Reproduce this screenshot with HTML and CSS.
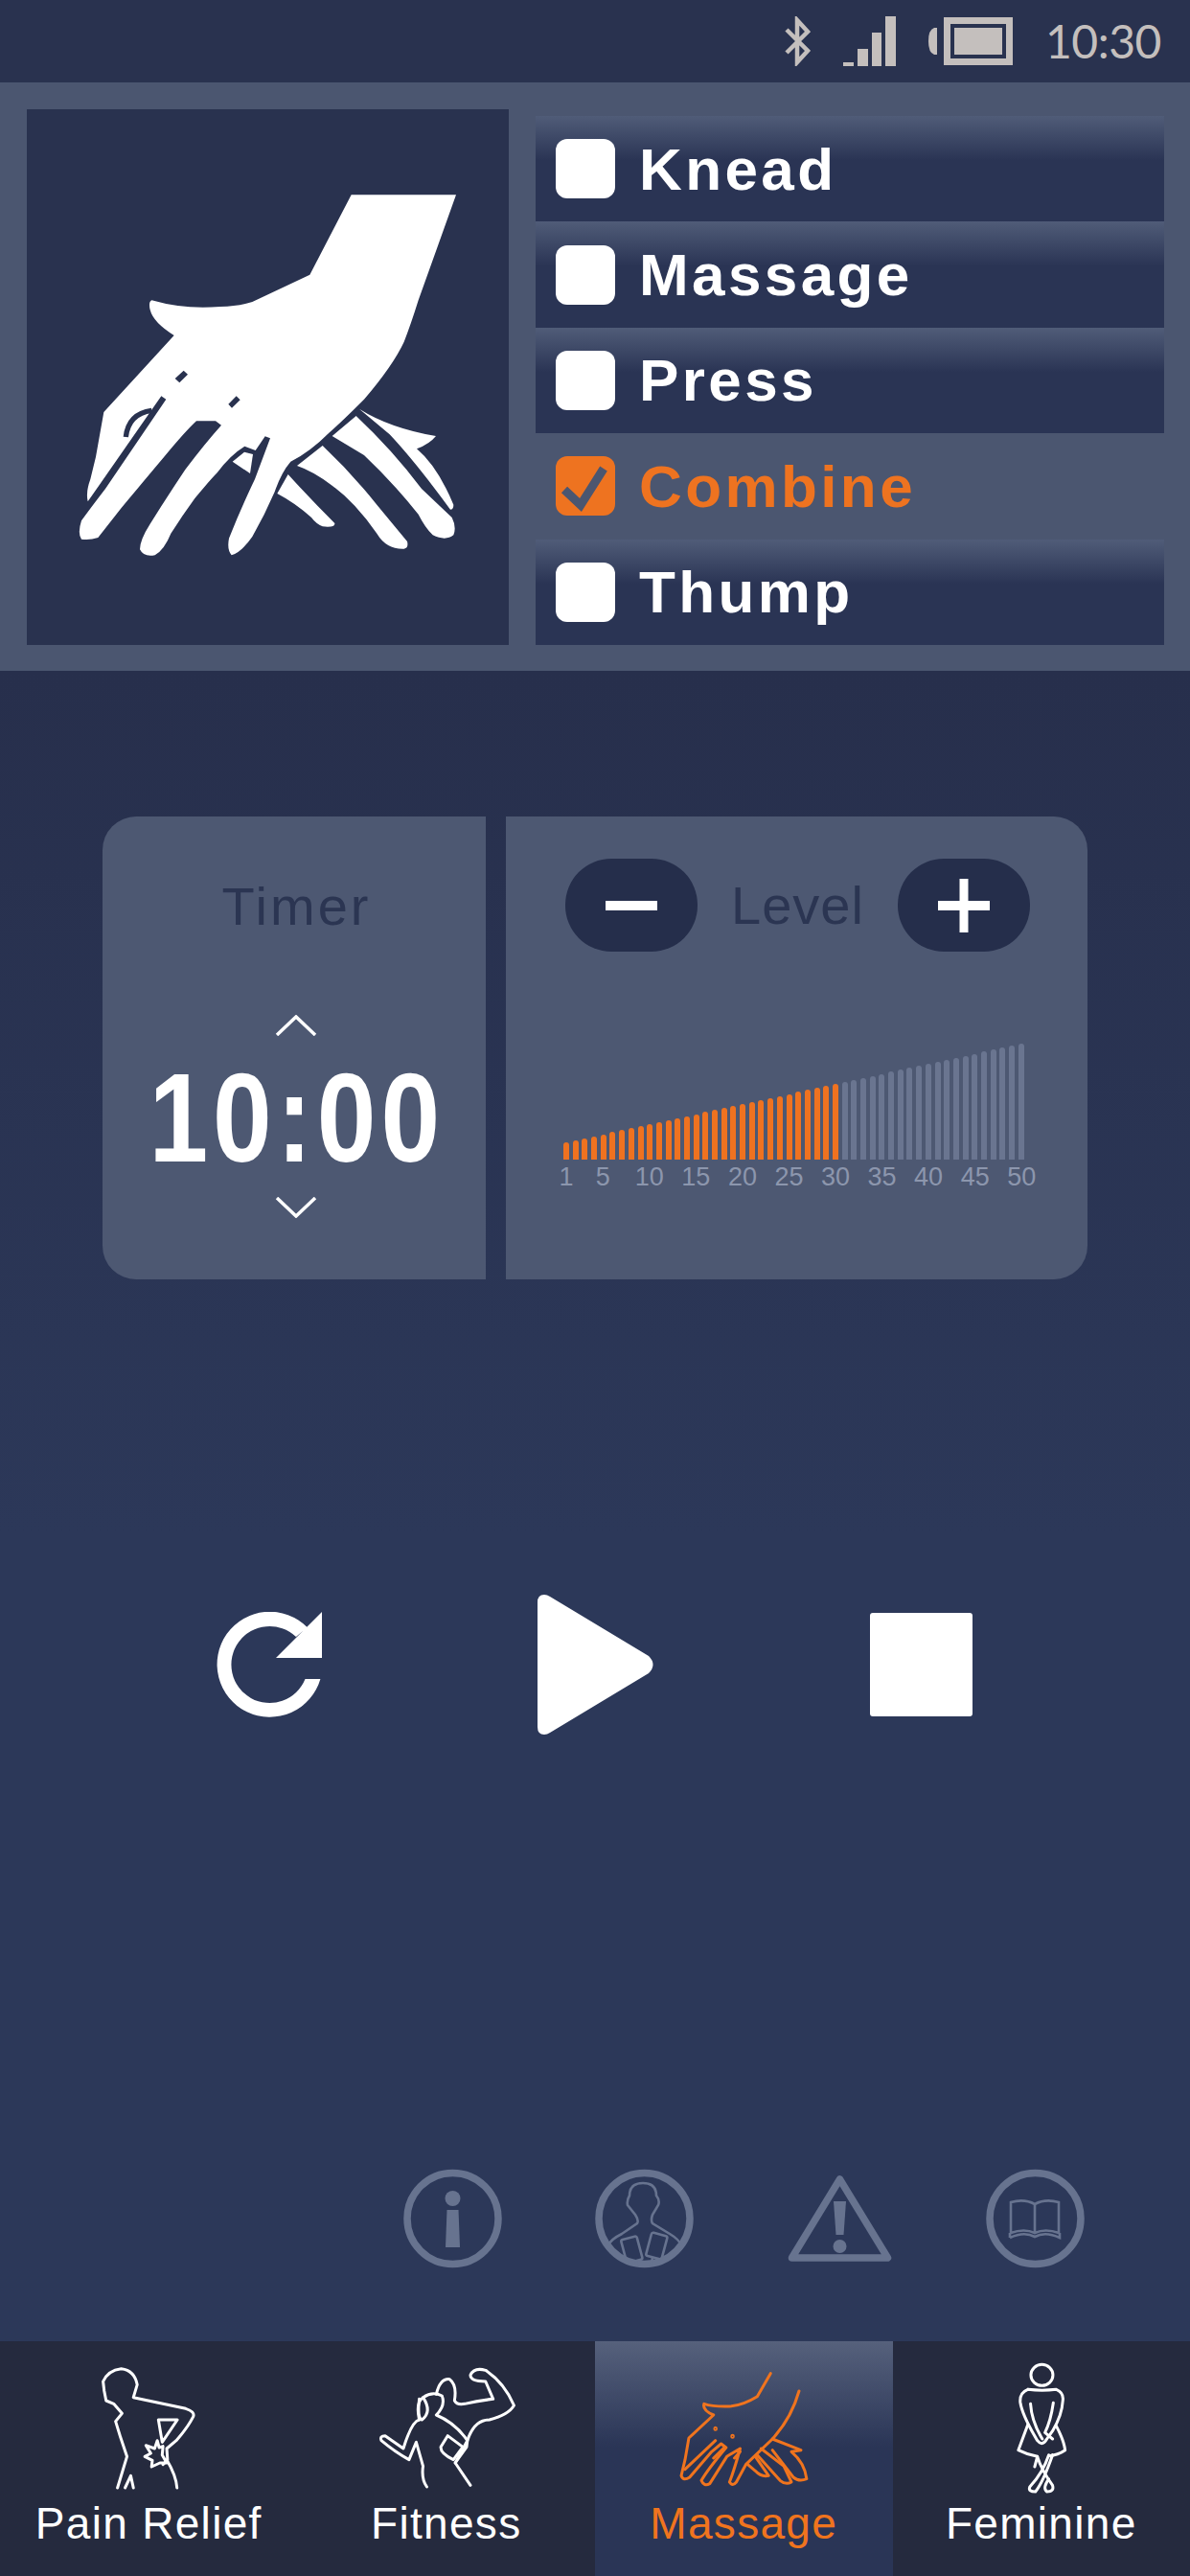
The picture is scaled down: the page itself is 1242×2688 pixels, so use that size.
FILE: index.html
```html
<!DOCTYPE html>
<html lang="en">
<head>
  <meta charset="utf-8">
  <title>Massage</title>
  <link rel="stylesheet" href="styles.css">
</head>
<body>
  <!-- status bar -->
  <div class="status-bar">
    <svg class="status-icon" width="27" height="52" viewBox="0 0 27 52"><path d="M2 14 L24 36 L13 48 L13 4 L24 16 L2 38" fill="none" stroke="#c4bfbd" stroke-width="4.5"/></svg>
    <svg class="status-icon" width="55" height="52" viewBox="0 0 55 52"><rect x="0" y="48" width="11" height="4" /><rect x="15" y="34" width="11" height="18"/><rect x="30" y="17" width="10" height="35"/><rect x="44" y="0" width="11" height="52"/></svg>
    <svg class="status-icon" width="88" height="50" viewBox="0 0 88 50"><path d="M9 11 H6 Q0 13 0 25 Q0 37 6 39 H9 Z"/><rect x="19.5" y="3.5" width="65" height="43" fill="none" stroke="#c4bfbd" stroke-width="7"/><rect x="27" y="11" width="50" height="28"/></svg>
    <span class="clock">10:30</span>
  </div>

  <!-- mode picker -->
  <div class="top-panel">
    <div class="hand-box">
      <svg class="hand" viewBox="-96 -138 1509 1677">
        <path d="M920,130 L1248,130 L1130,460 Q1105,540 1085,590 Q1050,665 960,770 Q890,840 850,875 Q790,935 730,965 Q700,1000 680,1060 Q650,1130 610,1200 Q575,1250 545,1258 Q530,1240 537,1205 Q575,1110 618,1020 L666,892 L650,886 L620,930 L586,917 Q540,945 500,1000 Q480,1020 430,1080 Q390,1135 355,1190 Q335,1240 305,1258 Q270,1265 258,1240 Q258,1210 290,1160 Q340,1080 400,990 Q460,910 513,851 L495,838 L435,838 Q400,870 330,955 Q250,1050 200,1110 L127,1203 Q100,1212 75,1208 Q62,1190 75,1150 Q100,1115 150,1050 L340,770 L325,760 L95,1090 Q88,1060 103,1020 L120,950 L145,810 L365,570 Q300,530 290,490 Q284,465 295,460 Q400,490 510,480 Q570,478 610,465 L790,380 Z"/>
        <path d="M585,935 L612,942 L603,1002 L548,965 Z"/>
        <path d="M722,1005 Q790,1080 868,1158 Q870,1172 830,1168 Q810,1160 795,1140 Q745,1095 688,1065 Z"/>
        <path d="M750,978 L830,915 Q920,1000 1000,1100 L1095,1215 Q1100,1235 1085,1238 Q1030,1240 1000,1190 Q930,1090 860,1040 Q800,995 750,978 Z"/>
        <path d="M860,885 L935,822 Q1050,930 1140,1050 L1235,1140 Q1250,1170 1240,1195 Q1215,1215 1175,1195 Q1150,1170 1130,1130 Q1050,1030 960,945 Z"/>
        <path d="M945,800 Q1040,860 1185,885 Q1165,910 1125,925 Q1190,980 1240,1100 Q1240,1115 1230,1115 Q1120,965 1040,880 Z"/>
        <path class="hand-cut" d="M368,705 L395,680 L408,692 L382,718 Z M535,785 L560,760 L572,772 L546,797 Z"/>
        <path class="hand-line" d="M214,888 Q222,815 295,805"/>
      </svg>
    </div>
    <div class="mode-list">
      <div class="mode-row"><span class="check"></span>Knead</div>
      <div class="mode-row"><span class="check"></span>Massage</div>
      <div class="mode-row"><span class="check"></span>Press</div>
      <div class="mode-row mode-on">
        <span class="check check-on"><svg width="62" height="62" viewBox="0 0 62 62"><path d="M9 35 L26 51 L50 13" fill="none" stroke="#4b5670" stroke-width="9"/></svg></span>Combine
      </div>
      <div class="mode-row"><span class="check"></span>Thump</div>
    </div>
  </div>

  <!-- timer and level -->
  <div class="card">
    <div class="timer-cell">
      <div class="card-title">Timer</div>
      <svg class="chev chev-up" width="44" height="22" viewBox="0 0 44 22"><path d="M2 21 L22 2 L42 21" fill="none" stroke="#fff" stroke-width="3.5"/></svg>
      <div class="time-big">10:00</div>
      <svg class="chev chev-down" width="44" height="22" viewBox="0 0 44 22"><path d="M2 1 L22 20 L42 1" fill="none" stroke="#fff" stroke-width="3.5"/></svg>
    </div>
    <div class="level-cell">
      <div class="level-head">
        <div class="round-btn"><svg width="56" height="56" viewBox="0 0 56 56"><rect x="1" y="23" width="54" height="10" fill="#fff"/></svg></div>
        <div class="card-title">Level</div>
        <div class="round-btn"><svg width="56" height="56" viewBox="0 0 56 56"><rect x="1" y="23" width="54" height="10" fill="#fff"/><rect x="23.5" y="0" width="9" height="56" fill="#fff"/></svg></div>
      </div>
      <div class="bars">
        <i class="bar bar-on" style="height:18px"></i><i class="bar bar-on" style="height:20px"></i><i class="bar bar-on" style="height:22px"></i><i class="bar bar-on" style="height:24px"></i><i class="bar bar-on" style="height:26px"></i>
        <i class="bar bar-on" style="height:29px"></i><i class="bar bar-on" style="height:31px"></i><i class="bar bar-on" style="height:33px"></i><i class="bar bar-on" style="height:35px"></i><i class="bar bar-on" style="height:37px"></i>
        <i class="bar bar-on" style="height:39px"></i><i class="bar bar-on" style="height:41px"></i><i class="bar bar-on" style="height:43px"></i><i class="bar bar-on" style="height:45px"></i><i class="bar bar-on" style="height:47px"></i>
        <i class="bar bar-on" style="height:50px"></i><i class="bar bar-on" style="height:52px"></i><i class="bar bar-on" style="height:54px"></i><i class="bar bar-on" style="height:56px"></i><i class="bar bar-on" style="height:58px"></i>
        <i class="bar bar-on" style="height:60px"></i><i class="bar bar-on" style="height:62px"></i><i class="bar bar-on" style="height:64px"></i><i class="bar bar-on" style="height:66px"></i><i class="bar bar-on" style="height:68px"></i>
        <i class="bar bar-on" style="height:71px"></i><i class="bar bar-on" style="height:73px"></i><i class="bar bar-on" style="height:75px"></i><i class="bar bar-on" style="height:77px"></i><i class="bar bar-on" style="height:79px"></i>
        <i class="bar" style="height:81px"></i><i class="bar" style="height:83px"></i><i class="bar" style="height:85px"></i><i class="bar" style="height:87px"></i><i class="bar" style="height:89px"></i>
        <i class="bar" style="height:92px"></i><i class="bar" style="height:94px"></i><i class="bar" style="height:96px"></i><i class="bar" style="height:98px"></i><i class="bar" style="height:100px"></i>
        <i class="bar" style="height:102px"></i><i class="bar" style="height:104px"></i><i class="bar" style="height:106px"></i><i class="bar" style="height:108px"></i><i class="bar" style="height:110px"></i>
        <i class="bar" style="height:113px"></i><i class="bar" style="height:115px"></i><i class="bar" style="height:117px"></i><i class="bar" style="height:119px"></i><i class="bar" style="height:121px"></i>
      </div>
      <div class="bar-labels">
        <span class="first">1</span><span>5</span><span>10</span><span>15</span><span>20</span><span>25</span><span>30</span><span>35</span><span>40</span><span>45</span><span>50</span>
      </div>
    </div>
  </div>

  <!-- transport -->
  <div class="transport">
    <svg width="112" height="110" viewBox="225 1682 112 110"><path fill="#fff" d="M334.4,1752 A55,55 0 1 1 320.6,1698 L309,1708 A40,40 0 1 0 318.5,1752 Z M336,1682 V1730 H288 Z"/></svg>
    <svg width="122" height="146" viewBox="560 1664 122 146"><path fill="#fff" d="M561,1672 Q561,1664 568,1664 Q571,1664 574,1666 L677,1728 Q686,1737 677,1746 L574,1808 Q571,1810 568,1810 Q561,1810 561,1802 Z"/></svg>
    <div class="stop-btn"></div>
  </div>

  <!-- small links -->
  <div class="info-row">
    <svg class="info-icon" width="103" height="104" viewBox="0 0 103 104">
      <circle cx="51.5" cy="52" r="47.5" fill="none"/>
      <ellipse class="solid" cx="51.5" cy="31" rx="8" ry="8"/>
      <path class="solid" d="M45.5,43 H57.5 L59,82 H44 Z"/>
    </svg>
    <svg class="info-icon" width="103" height="104" viewBox="0 0 103 104">
      <circle cx="51.5" cy="52" r="47.5" fill="none"/>
      <g class="thin">
        <path d="M14,80 Q16,74 28,68 L44,57 Q46,54 42,48 L34,38 Q33,33 36,28 Q36,15 50,15 Q64,15 64,28 Q68,33 66,38 L60,48 Q58,54 60,57 L78,68 Q88,74 90,80"/>
        <rect x="30" y="72" width="17" height="25" rx="2" transform="rotate(-15 38 85)"/>
        <rect x="56" y="68" width="17" height="25" rx="2" transform="rotate(15 64 80)"/>
        <path d="M43,97 L44,102 M60,93 L58,102"/>
      </g>
    </svg>
    <svg class="info-icon" width="111" height="93" viewBox="0 0 111 93">
      <path d="M55.5,5 L105.5,87 H5.5 Z" fill="none" stroke-linejoin="round"/>
      <path class="solid" d="M49,28 H62 L59.5,63 H51.5 Z"/>
      <ellipse class="solid" cx="55.5" cy="75" rx="7" ry="7"/>
    </svg>
    <svg class="info-icon" width="103" height="104" viewBox="0 0 103 104">
      <circle cx="51.5" cy="52" r="47.5" fill="none"/>
      <g class="thin">
        <path d="M51,37 Q40,31 26,35 V67 Q40,62 51,67 Q62,62 76,67 V35 Q62,31 51,37 V67"/>
        <path d="M25,72 V67 M25,72 Q40,65 51,71 Q62,65 77,72 V67"/>
      </g>
    </svg>
  </div>

  <!-- bottom tabs -->
  <div class="tabs">
    <div class="tab">
      <svg class="tab-icon" viewBox="0 90 785 441" preserveAspectRatio="none">
        <path d="M310,498 L335,400 L318,340 L305,290 L322,265 L300,235 L280,225 L275,195 L272,165 Q285,130 320,125 Q355,130 362,175 L352,215 Q430,235 490,250 Q515,260 510,275 Q495,310 465,350 L440,375 L442,410 L430,425"/>
        <path d="M418,285 H468 L428,355 Z"/>
        <path d="M415,350 L420,372 L430,368 L428,395 L440,420 L422,420 L400,432 L402,412 L382,400 L398,390 L385,365 L408,375 Z"/>
        <path d="M440,410 Q465,460 467,498 M330,498 L345,460 L352,498"/>
      </svg>
      <div class="tab-label">Pain Relief</div>
    </div>
    <div class="tab">
      <svg class="tab-icon" viewBox="785 90 785 441" preserveAspectRatio="none">
        <path d="M1105,285 Q1095,230 1115,215 Q1140,195 1165,210 Q1175,240 1150,270 Q1200,295 1232,350 L1200,420 L1240,490"/>
        <path d="M1125,495 Q1110,470 1115,430 L1097,355 L1078,410 Q1040,385 1005,350 Q1000,335 1015,335 L1063,375 Q1085,290 1105,285"/>
        <path d="M1105,220 Q1100,280 1112,285 Q1140,260 1115,215"/>
        <path d="M1150,205 Q1160,155 1185,158 Q1205,175 1198,225 Q1205,240 1225,235 Q1260,225 1300,220 L1280,165 Q1240,165 1240,145 Q1250,120 1280,130 Q1330,170 1355,240 Q1340,270 1290,285 Q1250,285 1232,350 L1230,370 L1200,420"/>
        <path d="M1180,335 L1220,370 L1195,410 Q1160,390 1162,370 Z"/>
      </svg>
      <div class="tab-label">Fitness</div>
    </div>
    <div class="tab tab-on">
      <svg class="tab-icon" viewBox="3 90 783 441" preserveAspectRatio="none">
        <path d="M465,140 L430,212 Q385,245 345,243 Q310,243 290,235 Q285,255 315,270 L250,342 L240,410 L230,460 Q235,478 252,465 L310,385 L335,360 L348,372 Q300,440 283,475 Q290,495 305,485 L350,400 L385,375 Q370,440 357,480 Q365,495 375,480 L400,425 L470,345 Q520,280 540,195"/>
        <path d="M240,440 L320,350 M470,345 L545,380 L520,385 Q555,420 560,470 Q540,480 525,465 L470,380"/>
        <path d="M440,375 L500,430 L520,480 Q505,490 490,475 L430,395"/>
        <path d="M425,400 L460,460 Q440,465 425,445 L405,425"/>
        <path d="M315,405 L345,370 M370,405 L385,385"/>
        <ellipse cx="320" cy="313" rx="2" ry="3"/><ellipse cx="365" cy="337" rx="2" ry="3"/>
      </svg>
      <div class="tab-label">Massage</div>
    </div>
    <div class="tab">
      <svg class="tab-icon" viewBox="785 90 783 441" preserveAspectRatio="none">
        <ellipse cx="1177" cy="145" rx="29" ry="33"/>
        <path d="M1140,190 Q1177,195 1215,190 Q1235,200 1232,225 Q1230,270 1205,320 L1190,345 Q1178,370 1165,350 Q1125,270 1120,230 Q1118,200 1140,190"/>
        <path d="M1147,235 Q1150,290 1178,345 M1207,232 Q1200,290 1185,325 L1205,345"/>
        <path d="M1140,300 L1115,380 Q1140,395 1165,400 L1158,432 M1215,305 Q1235,350 1238,380 Q1220,395 1195,398"/>
        <path d="M1195,395 Q1180,450 1145,495 Q1140,510 1160,510 Q1180,480 1205,395 M1165,400 Q1175,440 1205,490 Q1210,510 1190,510 Q1178,500 1195,470"/>
      </svg>
      <div class="tab-label">Feminine</div>
    </div>
  </div>
</body>
</html>
```

FILE: styles.css
```css
* {
  margin: 0; padding: 0; box-sizing: border-box;
}
body {
  width: 1242px; height: 2688px;
  overflow: hidden;
  display: flex; flex-direction: column;
  background: linear-gradient(#272f4c 700px, #2c3859 1600px);
  font-family: "Liberation Sans", Arial, sans-serif;
}

/* status bar */
.status-bar {
  height: 86px;
  display: flex; align-items: center; justify-content: flex-end;
  gap: 34px;
  padding-right: 30px;
  background-color: #29324f;
}
.status-icon { fill: #c4bfbd; }
.clock {
  width: 121px;
  font-family: Lato, "Liberation Sans", sans-serif;
  font-size: 48px;
  line-height: 52px;
  letter-spacing: -.5px;
  color: #c4bfbd;
  white-space: nowrap;
}

/* mode picker */
.top-panel {
  height: 614px;
  display: flex;
  gap: 28px;
  padding: 28px 27px 27px 28px;
  background-color: #4b5670;
}
.hand-box {
  width: 503px;
  background-color: #29324f;
}
.hand { display: block; width: 100%; height: 100%; fill: #fff; }
.hand-cut { fill: #29324f; }
.hand-line { fill: none; stroke: #29324f; stroke-width: 16; }

.mode-list {
  flex: 1;
  margin-top: 7px;
  display: grid;
  grid-template-rows: repeat(5, 1fr);
}
.mode-row {
  display: flex; align-items: center;
  gap: 25px;
  padding-left: 21px;
  font-size: 62px;
  font-weight: 700;
  letter-spacing: 3.4px;
  color: #fff;
  background: linear-gradient(#505c78, #2a3454 42%);
}
.mode-on {
  background: none;
  color: #ee7320;
}
.check {
  width: 62px; height: 62px;
  flex: none;
  border-radius: 12px;
  background-color: #fff;
}
.check-on { background-color: #ee7320; }
.check svg { display: block; }

/* timer and level */
.card {
  width: 1028px; height: 483px;
  margin: 152px auto 0;
  display: flex;
  gap: 21px;
}
.timer-cell, .level-cell { background-color: #4d5872; }
.timer-cell {
  width: 400px;
  padding-top: 62px;
  display: flex; flex-direction: column; align-items: center;
  border-radius: 35px 0 0 35px;
}
.level-cell {
  flex: 1;
  padding: 44px 0 0 60px;
  border-radius: 0 35px 35px 0;
}
.card-title {
  font-size: 56px;
  line-height: 64px;
  letter-spacing: 3px;
  color: #2b3552;
}
.timer-cell .card-title { margin-left: 5px; }
.chev { display: block; margin-left: 3px; }
.chev-up { margin-top: 81px; }
.chev-down { margin-top: 32px; }
.time-big {
  margin: 36px 0 0 6px;
  font-size: 132px;
  line-height: 100px;
  font-weight: 700;
  letter-spacing: 6px;
  color: #fff;
  transform: scaleX(.84);
}
.level-head {
  display: flex; align-items: center;
  gap: 35px;
  margin-left: 2px;
}
.level-head .card-title { letter-spacing: 1px; }
.round-btn {
  width: 138px; height: 97px;
  display: flex; align-items: center; justify-content: center;
  border-radius: 48px;
  background-color: #252e4b;
}
.bars {
  width: 481px; height: 121px;
  margin-top: 96px;
  display: flex; align-items: flex-end; justify-content: space-between;
}
.bar {
  display: block;
  width: 6px;
  border-radius: 3px 3px 0 0;
  background-color: #6a7590;
}
.bar-on { background-color: #ef7220; }
.bar-labels {
  display: flex;
  margin: 3px 0 0 -7px;
  font-size: 27px;
  line-height: 30px;
  color: #8c96ad;
}
.bar-labels span { width: 48.55px; text-align: center; flex: none; }
.bar-labels .first { width: 20px; margin-right: 4px; }

/* transport */
.transport {
  margin-top: 329px;
  display: grid;
  grid-template-columns: repeat(3, 340px);
  justify-content: center;
  justify-items: center;
  align-items: center;
}
.transport svg { display: block; }
.stop-btn {
  width: 107px; height: 108px;
  border-radius: 3px;
  background-color: #fff;
}

/* small links */
.info-row {
  margin: 453px 0 0 421px;
  display: flex; align-items: center;
  gap: 97px;
}
.info-icon { display: block; fill: none; stroke: #67738f; stroke-width: 7.5; }
.info-icon .solid { fill: #67738f; stroke: none; }
.info-icon .thin { stroke-width: 2.6; }

/* bottom tabs */
.tabs {
  margin-top: auto;
  height: 245px;
  display: grid;
  grid-template-columns: repeat(4, 1fr);
  background-color: #252a3e;
}
.tab {
  padding-top: 17px;
  text-align: center;
  color: #fff;
}
.tab-on {
  color: #f0741e;
  background: linear-gradient(#56617c, #2a3556 45%);
}
.tab-icon {
  display: block;
  width: 100%; height: 147px;
  fill: none;
  stroke: currentColor;
}
.tab-icon * {
  vector-effect: non-scaling-stroke;
  stroke-width: 3;
  stroke-linejoin: round;
  stroke-linecap: round;
}
.tab-label {
  font-size: 46px;
  line-height: 52px;
  letter-spacing: 1.3px;
}
```
